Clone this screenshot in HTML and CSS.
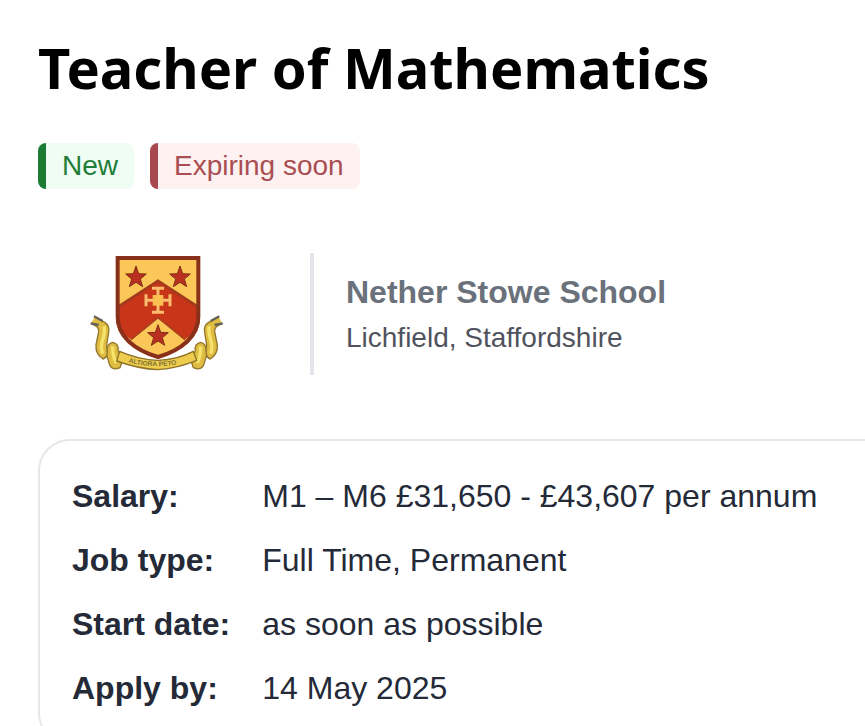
FILE: index.html
```html
<!DOCTYPE html>
<html lang="en">

<head>
    <meta charset="UTF-8">
    <meta name="viewport" content="width=device-width, initial-scale=1.0">
    <title>Teacher of Mathematics</title>
    <link rel="stylesheet" href="styles.css">
</head>

<body>
    <main class="job">
        <h1>Teacher of Mathematics</h1>

        <div class="badges">
            <span class="badge badge-new">New</span>
            <span class="badge badge-expiring">Expiring soon</span>
        </div>

        <section class="school">
            <svg class="school-logo" viewBox="-126 24 720 366" role="img" aria-label="Nether Stowe School crest">
                <defs>
                    <clipPath id="shield">
                        <path d="M108 34H360V215C360 278 306 320 234 341C162 320 108 278 108 215Z" />
                    </clipPath>
                    <path id="star" d="M0-33L8-10L31-9L13 6L20 29L0 16L-20 29L-13 6L-31-9L-8-10Z" />
                    <g id="ribbon-tail">
                        <g fill="#dfbd42" stroke="#93772b" stroke-width="4" stroke-linejoin="round">
                            <path d="M44 216L74 232Q90 242 86 262L80 300Q80 318 86 330L70 342Q46 328 48 300L56 260Q58 244 33 236" />
                            <path d="M66 341Q82 342 82 318Q80 296 98 292Q118 296 114 318L128 344L120 368Q92 380 86 350L80 330" />
                        </g>
                        <path fill="none" stroke="#66625a" stroke-width="7" d="M42 214L68 228M32 235L56 240" />
                        <path fill="none" stroke="#f5e36c" stroke-width="10" d="M72 244Q76 260 68 284Q61 306 68 326M98 304Q97 330 108 354" />
                    </g>
                </defs>

                <use href="#ribbon-tail" />
                <use href="#ribbon-tail" transform="translate(460 0) scale(-1 1)" />

                <!-- shield -->
                <g clip-path="url(#shield)">
                    <path fill="#fbc759" d="M108 34H360V341H108Z" />
                    <path fill="#c83519" d="M108 192L234 108L360 192V255L312 284L234 220L156 284L108 255Z" />
                    <path fill="none" stroke="#a43a1b" stroke-width="9" d="M108 190L234 108L360 190" />
                    <path fill="none" stroke="#a9401e" stroke-width="5" d="M152 284L234 218L316 284" />
                </g>
                <path fill="none" stroke="#88301a" stroke-width="12" d="M113 39H355V215C355 275 304 315 234 336C164 315 113 275 113 215Z" />

                <g fill="#b92f20" stroke="#803018" stroke-width="3">
                    <use href="#star" x="168" y="96" />
                    <use href="#star" x="300" y="96" />
                    <use href="#star" x="234" y="272" />
                </g>

                <!-- cross potent with a square centre -->
                <path fill="none" stroke="#f9bd6d" stroke-width="9" d="M234 128V204M196 166H272M216 130H252M216 202H252M198 148V184M270 148V184" />
                <path fill="#fbc04f" d="M218 150H250V182H218Z" />

                <!-- motto ribbon -->
                <path fill="#edcc4e" stroke="#8e7329" stroke-width="4" d="M119 319Q176 344 234 346Q292 344 340 319L350 346Q292 370 234 374Q176 372 110 348Z" />
                <path id="motto" fill="none" d="M145 352Q234 376 328 350" />
                <text class="motto">
                    <textPath href="#motto">ALTIORA PETO</textPath>
                </text>
            </svg>

            <div class="school-info">
                <h2>Nether Stowe School</h2>
                <p>Lichfield, Staffordshire</p>
            </div>
        </section>

        <dl class="details">
            <dt>Salary:</dt>
            <dd>M1 – M6 £31,650 - £43,607 per annum</dd>
            <dt>Job type:</dt>
            <dd>Full Time, Permanent</dd>
            <dt>Start date:</dt>
            <dd>as soon as possible</dd>
            <dt>Apply by:</dt>
            <dd>14 May 2025</dd>
        </dl>
    </main>
</body>

</html>
```

FILE: styles.css
```css
body {
    font-family: "Liberation Sans", Arial, sans-serif;
    font-size: 32px;
    line-height: 40px;
    color: #242a37;
    background-color: #fff;
    margin: 0;
    overflow-x: hidden;
}

h1,
h2,
p,
dl,
dd {
    margin: 0;
}

.job {
    display: flex;
    flex-direction: column;
    padding: 35px 0 40px 38px;
}

h1 {
    font-family: "Noto Sans", sans-serif;
    font-size: 56px;
    line-height: 64px;
    color: #000;
}

.badges {
    display: flex;
    gap: 16px;
    margin-top: 44px;
}

.badge {
    padding: 0 16px;
    border-left: 8px solid;
    border-radius: 8px;
    font-size: 28px;
    line-height: 46px;
}

.badge-new {
    color: #217c37;
    border-color: #1c7c34;
    background-color: #effdf5;
}

.badge-expiring {
    color: #a94e52;
    border-color: #a8474e;
    background-color: #fef1f1;
}

.school {
    display: flex;
    gap: 32px;
    margin: 64px 0;
}

.school-logo {
    width: 240px;
    height: 122px;
}

.motto {
    font-size: 20px;
    font-weight: bold;
    fill: #80722f;
}

.school-info {
    display: flex;
    flex-direction: column;
    justify-content: center;
    gap: 6px;
    padding: 2px 0 0 32px;
    border-left: 4px solid #e4e5eb;
}

h2 {
    font-size: 32px;
    color: #6a717b;
}

.school-info p {
    font-size: 28px;
    color: #50535e;
}

/* the card runs off the right side of the window */
.details {
    display: grid;
    grid-template-columns: max-content 1fr;
    gap: 24px 32px;
    margin-right: -40px;
    padding: 35px 32px;
    border: 2px solid #e7e7e9;
    border-radius: 32px;
}

dt {
    font-weight: bold;
}
```
